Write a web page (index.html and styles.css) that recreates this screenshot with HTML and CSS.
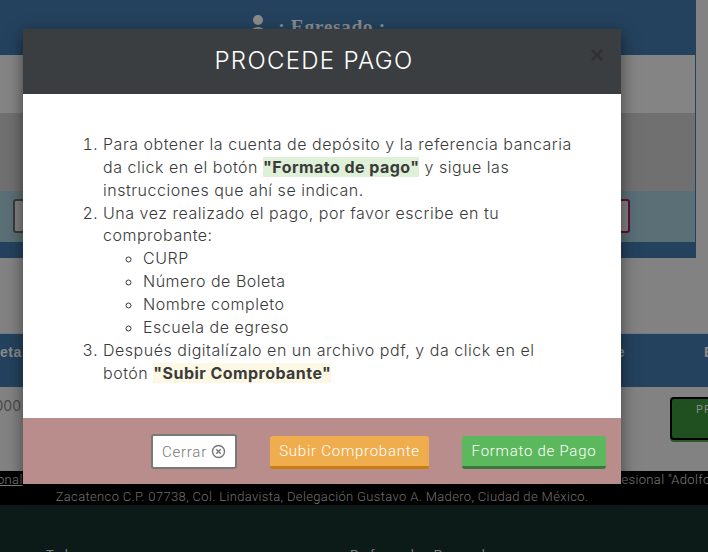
FILE: index.html
```html
<!DOCTYPE html>
<html lang="es">
<head>
<meta charset="utf-8">
<title>Procede pago</title>
<link rel="stylesheet" href="styles.css">
</head>
<body>
<div class="page">
  <div class="main">
    <header class="band-top">
      <svg class="user" width="16" height="20" viewBox="0 0 16 20"><circle cx="8" cy="6" r="5" fill="#8a8a8a"/><path d="M1 20c0-5 3-7 7-7s7 2 7 7z" fill="#8a8a8a"/></svg>
      <span class="role">: Egresado :</span>
    </header>
    <div class="band-light"></div>
    <div class="band-dark"></div>
    <div class="band-teal">
      <span class="ghost-left"></span>
      <span class="ghost-right"></span>
    </div>
    <div class="band-blue"></div>
    <div class="band-light gap"></div>
    <div class="thead"><span>Boleta</span><span class="th-e">e</span><span class="th-last">Estatus</span></div>
    <div class="trow"><span class="cell">2000</span><span class="state">PP</span></div>
  </div>
  <footer class="foot-black">
    <p class="foot-one"><a href="#">Instituto Politécnico Nacional</a><span class="foot-gap">Unidad Profesional "Adolfo López Mateos"</span></p>
    <p class="foot-two">Zacatenco C.P. 07738, Col. Lindavista, Delegación Gustavo A. Madero, Ciudad de México.</p>
  </footer>
  <div class="foot-dark"><span>Todos</span><span>Profesorado y Personal</span></div>
</div>
<section class="modal">
  <div class="modal-head">
    <h1>PROCEDE PAGO</h1>
    <span class="close">×</span>
  </div>
  <div class="modal-body">
    <ol>
      <li>Para obtener la cuenta de depósito y la referencia bancaria da click en el botón <b class="hl-green">"Formato de pago"</b> y sigue las instrucciones que ahí se indican.</li>
      <li>Una vez realizado el pago, por favor escribe en tu comprobante:
        <ul>
          <li>CURP</li>
          <li>Número de Boleta</li>
          <li>Nombre completo</li>
          <li>Escuela de egreso</li>
        </ul>
      </li>
      <li>Después digitalízalo en un archivo pdf, y da click en el botón <b class="hl-yellow">"Subir Comprobante"</b></li>
    </ol>
  </div>
  <div class="modal-foot">
    <button class="btn btn-close">Cerrar <svg width="15" height="15" viewBox="0 0 15 15" fill="none" stroke="#777" stroke-width="1.4"><circle cx="7.5" cy="7.5" r="6"/><path d="M5.2 5.2l4.6 4.6M9.8 5.2l-4.6 4.6"/></svg></button>
    <button class="btn btn-warn">Subir Comprobante</button>
    <button class="btn btn-ok">Formato de Pago</button>
  </div>
</section>
</body>
</html>
```
FILE: styles.css
```css
* { box-sizing: border-box; }
html, body { margin: 0; height: 552px; overflow: hidden; }
body { background: #828282; font-family: "Inter", "Liberation Sans", sans-serif; }
.page { height: 552px; display: flex; flex-direction: column; overflow: hidden; }
.main { height: 471px; display: flex; flex-direction: column; }
.band-top { height: 55px; width: 696px; background: #24425e; display: flex; justify-content: center; gap: 12px; padding-top: 14px; flex: none; padding-right: 60px; }
.user { flex: none; }
.role { font: bold 19.5px "Liberation Serif", serif; color: #8a8a8a; letter-spacing: .6px; margin-top: 2px; }
.band-light { height: 58px; width: 696px; background: #848484; border-right: 1px solid #24425e; flex: none; }
.band-light.gap { height: 75px; width: 708px; background: #828282; border: 0; }
.band-dark { height: 78px; width: 696px; background: #707070; border-right: 1px solid #24425e; flex: none; }
.band-teal { height: 51px; width: 696px; background: #5a6f76; border-right: 1px solid #24425e; flex: none; display: flex; justify-content: space-between; padding: 8px 65px 0 13px; }
.ghost-left { width: 30px; height: 34px; border: 2px solid #3a3a3a; border-radius: 3px; background: #808080; }
.ghost-right { width: 30px; height: 34px; border: 2px solid #5e1030; border-radius: 3px; background: #808080; }
.band-blue { height: 16px; width: 696px; background: #24425e; flex: none; }
.thead { height: 54px; background: #24425e; border-top: 1px solid #6f7c88; flex: none; display: flex; color: #8a8a8a; font: bold 14px "Liberation Sans", sans-serif; letter-spacing: .5px; padding-top: 10px; justify-content: flex-end; overflow: hidden; }
.thead span:first-child { margin-right: auto; margin-left: -24px; }
.th-e { margin-right: 79px; }
.th-last { margin-right: -50px; }
.trow { height: 84px; background: #828282; display: flex; justify-content: space-between; align-items: flex-start; flex: none; overflow: hidden; }
.cell { color: #4a4a4a; font-size: 14px; margin-left: -14px; margin-top: 10px; }
.state { width: 60px; height: 43px; margin: 10px -22px 0 0; background: #20501f; border: 2px solid #000; border-radius: 4px; box-shadow: 0 2px 0 #2c5a2c; color: #8a8a8a; font-size: 11px; letter-spacing: 1px; text-align: left; padding: 3px 0 0 24px; }
.foot-black { height: 34px; background: #000; color: #7c7c7c; font: 300 13px "Roboto", sans-serif; letter-spacing: .35px; flex: none; text-align: center; overflow: hidden; }
.foot-black p { margin: 0; white-space: nowrap; }
.foot-one { height: 17px; line-height: 17px; margin-left: -154px !important; text-align: left; }
.foot-one a { color: #7c7c7c; }
.foot-gap { margin-left: 528px; }
.foot-two { line-height: 17px; padding-right: 64px; }
.foot-dark { flex: 1; background: #0c1a18; color: #7c7c7c; font: 13px "Roboto", sans-serif; display: flex; gap: 268px; padding: 42px 0 0 46px; }

.modal { position: fixed; left: 23px; top: 29px; width: 598px; height: 455px; display: flex; flex-direction: column; box-shadow: 0 5px 15px rgba(0,0,0,.5); }
.modal-head { height: 65px; background: #3a3e41; position: relative; flex: none; }
.modal-head h1 { margin: 0; padding-right: 16px; text-align: center; color: #fff; font: 300 24px/63px "Inter", sans-serif; letter-spacing: 1.3px; }
.close { position: absolute; right: 17px; top: 13px; font: bold 24px/26px "Liberation Sans", sans-serif; color: #2e3032; }
.modal-body { flex: 1; background: #fff; padding: 39px 40px 0; color: #3a3a3a; font-size: 16px; line-height: 22.857px; font-weight: 300; letter-spacing: .52px; }
.modal-body ol { margin: 0; padding-left: 40px; }
.modal-body ul { margin: 0; padding-left: 40px; list-style: circle; }
.modal-body b { font-weight: 700; letter-spacing: .45px; }
.hl-green { background: #dff0d8; }
.hl-yellow { background: #fcf8e3; }
.modal-foot { height: 66px; background: #b98d8b; flex: none; display: flex; justify-content: flex-end; align-items: flex-start; gap: 33px; padding: 16px 15px 0 0; }
.btn { font: 300 15px "Roboto", sans-serif; letter-spacing: .75px; border: 0; border-radius: 3px; color: #fff; padding: 0; height: 33px; margin-top: 2px; }
.btn-close { width: 86px; height: 35px; margin-top: 0; background: #fff; border: 2px solid #767b78; color: #777; display: flex; align-items: center; justify-content: center; gap: 4px; }
.btn-warn { width: 159px; background: #f0ad4e; border-bottom: 3px solid #c97d10; }
.btn-ok { width: 144px; background: #5cb85c; border-bottom: 3px solid #37793a; }
```
